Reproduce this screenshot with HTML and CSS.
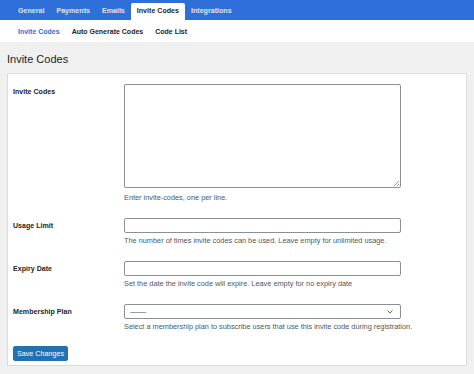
FILE: index.html
```html
<!DOCTYPE html>
<html>
<head>
<meta charset="utf-8">
<link rel="stylesheet" href="styles.css">
</head>
<body>
<nav class="tabs">
  <span class="tab">General</span>
  <span class="tab">Payments</span>
  <span class="tab">Emails</span>
  <span class="tab active">Invite Codes</span>
  <span class="tab">Integrations</span>
</nav>
<nav class="subnav">
  <span class="sub active">Invite Codes</span>
  <span class="sub">Auto Generate Codes</span>
  <span class="sub">Code List</span>
</nav>
<main class="page">
  <h1 class="title">Invite Codes</h1>
  <section class="card">
    <div class="row">
      <div class="label">Invite Codes</div>
      <div class="field">
        <div class="textarea"><span class="grip"></span></div>
        <p class="desc desc-first">Enter invite-codes, one per line.</p>
      </div>
    </div>
    <div class="row">
      <div class="label">Usage Limit</div>
      <div class="field">
        <div class="input"></div>
        <p class="desc">The number of times invite codes can be used. Leave empty for unlimited usage.</p>
      </div>
    </div>
    <div class="row">
      <div class="label">Expiry Date</div>
      <div class="field">
        <div class="input"></div>
        <p class="desc">Set the date the invite code will expire. Leave empty for no expiry date</p>
      </div>
    </div>
    <div class="row">
      <div class="label">Membership Plan</div>
      <div class="field">
        <div class="input select"><span class="dash">——</span>
          <svg class="chev" width="6" height="4" viewBox="0 0 6 4"><path d="M0.5 0.5 L3 3 L5.5 0.5" fill="none" stroke="#50575e" stroke-width="0.9"/></svg>
        </div>
        <p class="desc">Select a membership plan to subscribe users that use this invite code during registration.</p>
      </div>
    </div>
    <button class="btn">Save Changes</button>
  </section>
</main>
</body>
</html>
```

FILE: styles.css
```css
* { box-sizing: border-box; }
html, body { margin: 0; padding: 0; }
body {
  width: 474px;
  height: 374px;
  overflow: hidden;
  background: #f0f0f1;
  font-family: "Liberation Sans", Arial, sans-serif;
  color: #1d2327;
}
.tabs {
  display: flex;
  align-items: flex-end;
  height: 20px;
  background: #2f6fda;
  padding-left: 12px;
}
.tab {
  display: block;
  padding: 0 6px;
  height: 17px;
  line-height: 16px;
  font-size: 7.1px;
  font-weight: bold;
  color: #dde7fa;
}
.tab.active {
  background: #fff;
  color: #1d2327;
  border-radius: 2px 2px 0 0;
}
.subnav {
  display: flex;
  gap: 12px;
  height: 22px;
  align-items: center;
  background: #fff;
  padding-left: 18px;
}
.sub {
  font-size: 7px;
  font-weight: bold;
  color: #1d2327;
}
.sub.active { color: #2f6fda; }
.page {
  padding: 0 7px;
}
.title {
  margin: 0;
  height: 31px;
  line-height: 34px;
  font-size: 11px;
  font-weight: normal;
  color: #1d2327;
}
.card {
  background: #fff;
  border: 1px solid #dcdcde;
  width: 460px;
  height: 293px;
  padding: 10px 5px 5px;
}
.row {
  display: flex;
  margin-bottom: 15px;
}
.label {
  width: 111px;
  flex: none;
  padding-top: 3px;
  line-height: 11px;
  font-size: 7.1px;
  font-weight: bold;
  color: #1d2327;
}
.field { flex: none; width: 310px; }
.textarea {
  position: relative;
  width: 277px;
  height: 104px;
  border: 1px solid #8c8f94;
  border-radius: 2px;
}
.grip {
  position: absolute;
  right: 1px;
  bottom: 1px;
  width: 5px;
  height: 5px;
  background: linear-gradient(135deg, transparent 45%, #999 45%, #999 55%, transparent 55%, transparent 75%, #999 75%, #999 85%, transparent 85%);
}
.input {
  width: 277px;
  height: 15px;
  border: 1px solid #8c8f94;
  border-radius: 2px;
}
.select {
  display: flex;
  align-items: center;
  justify-content: space-between;
  padding: 0 7px 0 5px;
}
.dash {
  font-size: 8px;
  color: #3c434a;
}
.chev { display: block; }
.desc {
  margin: 3px 0 0;
  line-height: 10px;
  font-size: 7.35px;
  color: #50575e;
}
.desc-first { margin-top: 5px; }
.btn {
  display: block;
  margin-top: -1px;
  width: 55px;
  height: 15px;
  padding: 0;
  background: #2271b1;
  border: 1px solid #2271b1;
  border-radius: 2px;
  color: #fff;
  font-family: "Liberation Sans", Arial, sans-serif;
  font-size: 7.2px;
  line-height: 13px;
}
```
